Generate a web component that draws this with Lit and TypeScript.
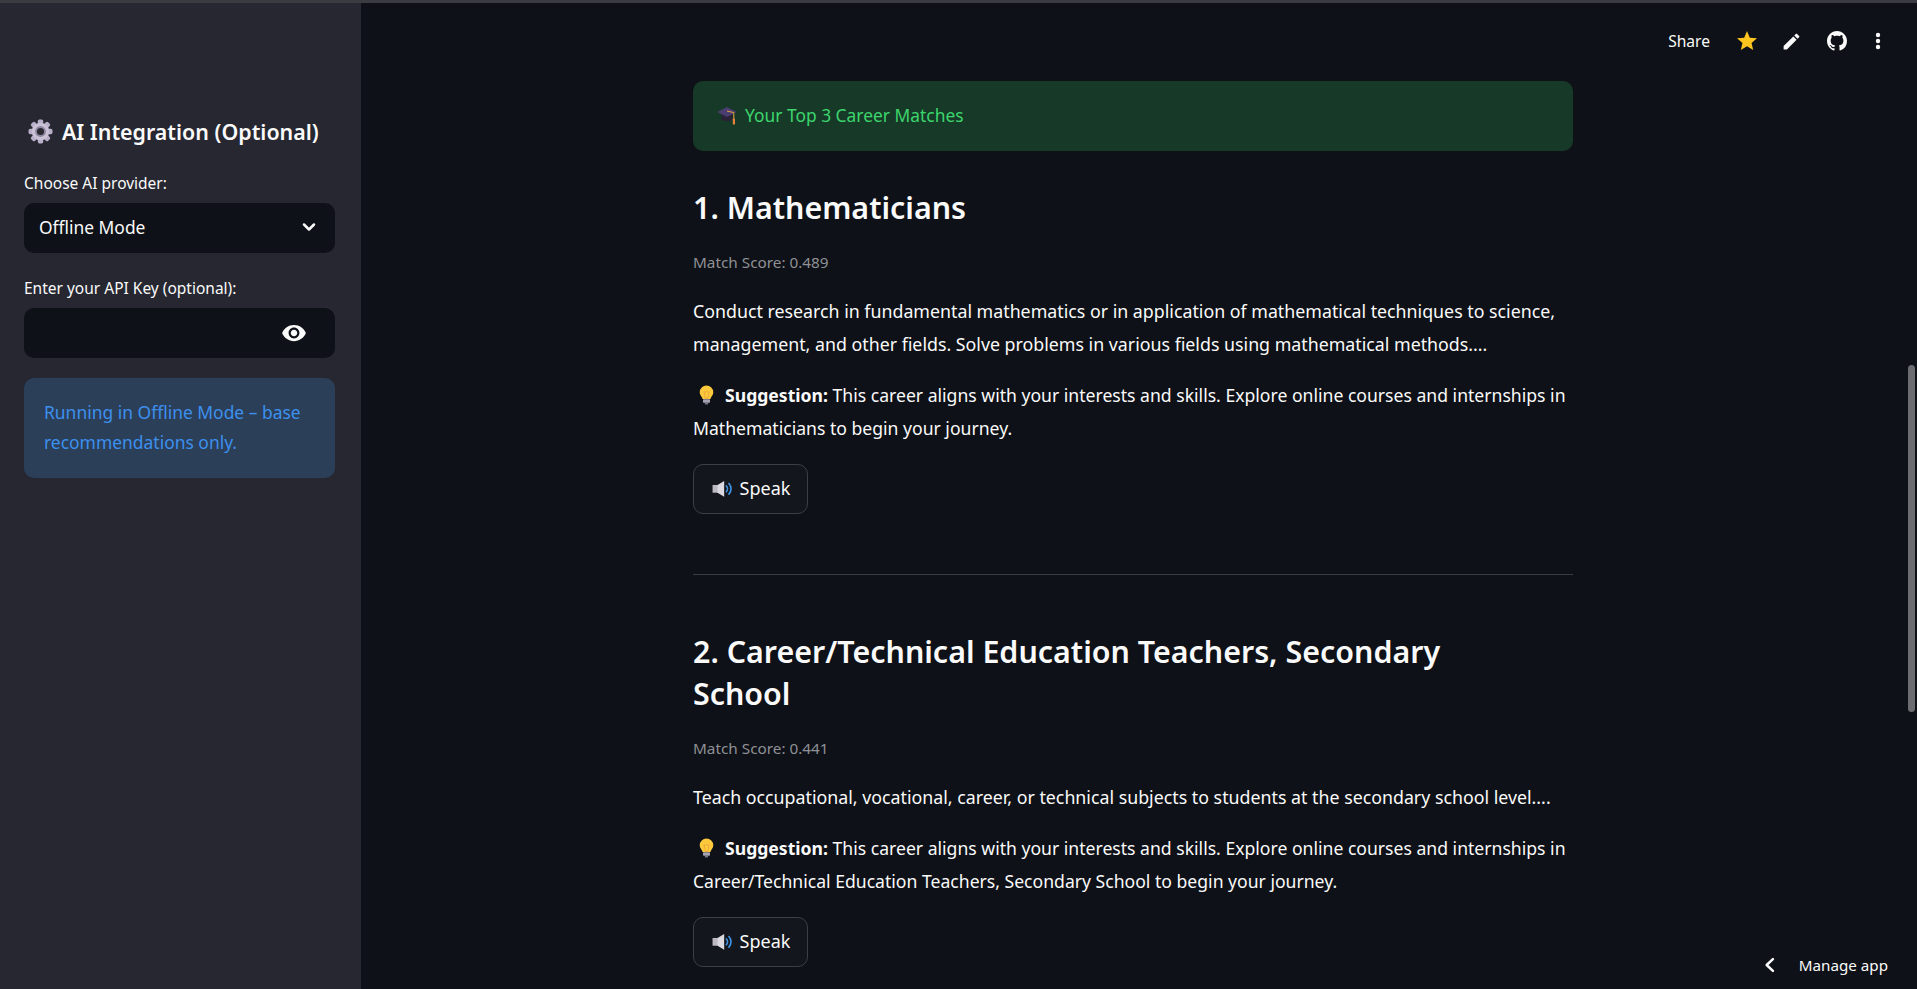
import { html, css, LitElement, svg } from 'lit';
import { customElement } from 'lit/decorators.js';

const careers = [
	{
		title: '1. Mathematicians',
		score: '0.489',
		text: 'Conduct research in fundamental mathematics or in application of mathematical techniques to science, management, and other fields. Solve problems in various fields using mathematical methods....',
		name: 'Mathematicians',
	},
	{
		title: '2. Career/Technical Education Teachers, Secondary School',
		score: '0.441',
		text: 'Teach occupational, vocational, career, or technical subjects to students at the secondary school level....',
		name: 'Career/Technical Education Teachers, Secondary School',
	},
];

const gear = svg`<svg class="emoji" viewBox="0 0 24 24" width="25" height="25">
	<g fill="#b9afc9">
		${[0, 45, 90, 135, 180, 225, 270, 315].map((a) => svg`<rect x="9.4" y="0.5" width="5.2" height="6" rx="1.6" transform="rotate(${a} 12 12)"/>`)}
	</g>
	<circle cx="12" cy="12" r="8.4" fill="#c9c2d6"/>
	<circle cx="12" cy="12" r="5.2" fill="#8f869f"/>
	<circle cx="12" cy="12" r="3.4" fill="#2b2a33"/>
</svg>`;

const cap = svg`<svg class="emoji" viewBox="0 0 20 19" width="20" height="19">
	<path d="M4.6 8v5.4c2 2 8.800 2 10.800 0V8z" fill="#2a2338"/>
	<path d="M10 1 19.800 6 10 11 .2 6z" fill="#4a3d70"/>
	<path d="M10 5l6.800 1.600v6.400" fill="none" stroke="#e5a53f" stroke-width="1"/>
	<rect x="15.800" y="12.600" width="2.200" height="6" rx=".7" fill="#e8833a"/>
</svg>`;

const bulb = svg`<svg class="emoji" viewBox="0 0 17 20" width="17" height="20">
	<path d="M8.500 .5a6.800 6.800 0 0 0-6.800 6.800c0 2.800 2.200 4.200 2.900 6.700h7.800c.7-2.500 2.900-3.900 2.900-6.700A6.800 6.800 0 0 0 8.500 .5z" fill="#fcc93c"/>
	<path d="M6 6.500c.8.800 1.700.8 2.500 0 .8.800 1.700.8 2.500 0L9.800 13.500H7.200z" fill="none" stroke="#e8963a" stroke-width=".6"/>
	<rect x="5" y="14.200" width="7" height="3.600" rx=".8" fill="#a5a3b3"/>
	<rect x="6.800" y="17.800" width="3.400" height="1.800" rx=".8" fill="#77758a"/>
</svg>`;

const speaker = svg`<svg class="emoji" viewBox="0 0 19 16" width="21" height="17.700">
	<rect x=".5" y="4.500" width="5" height="7" fill="#bdb9c2"/>
	<path d="M5 4.500 11 .8v14.400l-6-3.700z" fill="#dcd8e0"/>
	<path d="M13 5.400a3.800 3.800 0 0 1 0 5.200M15.300 3.200a7 7 0 0 1 0 9.600" fill="none" stroke="#3f93e4" stroke-width="1.500" stroke-linecap="round"/>
</svg>`;

@customElement('app-root')
export class AppRoot extends LitElement {
	static styles = css`
		:host {
			display: flex;
			flex-direction: column;
			height: 100vh;
			overflow: hidden;
			position: relative;
			background: #0e1117;
			color: #fafafa;
			font-family: 'Noto Sans', sans-serif;
			font-size: 18px;
		}

		.topline {
			height: 3px;
			flex: none;
			background: #3b3c41;
		}

		.page {
			flex: 1;
			display: flex;
			min-height: 0;
		}

		.sidebar {
			width: 361px;
			flex: none;
			box-sizing: border-box;
			background: #262730;
			padding: 110px 26px 0 24px;
		}

		.side-title {
			display: flex;
			align-items: center;
			gap: 9px;
			margin: 0 0 0 4px;
			height: 36px;
			font-size: 21.4px;
			font-weight: 600;
			white-space: nowrap;
		}

		.field-label {
			font-size: 15.5px;
			line-height: 24px;
			margin-top: 22px;
			margin-bottom: 8px;
		}

		.field-label.second {
			margin-top: 23px;
			margin-bottom: 8px;
		}

		.field {
			height: 50px;
			border-radius: 10px;
			background: #0e1117;
			display: flex;
			align-items: center;
			justify-content: space-between;
			box-sizing: border-box;
			padding: 0 16px 2px 15px;
			font-size: 17.4px;
		}

		.field.key {
			padding: 0 28px 0 16px;
			justify-content: flex-end;
		}

		.side-info {
			margin-top: 20px;
			height: 100px;
			box-sizing: border-box;
			padding: 19px 20px;
			border-radius: 10px;
			background: #2b3f58;
			color: #3d8fee;
			font-size: 17.45px;
			line-height: 30px;
		}

		.main {
			flex: 1;
			display: flex;
			flex-direction: column;
			align-items: flex-start;
			padding: 78px 0 0 332px;
			min-width: 0;
		}

		.content {
			width: 880px;
		}

		.banner {
			height: 70px;
			box-sizing: border-box;
			display: flex;
			align-items: center;
			gap: 8px;
			padding: 0 24px 2px;
			border-radius: 10px;
			background: #173a28;
			color: #3dd56d;
			font-size: 17.4px;
		}

		h2 {
			margin: 35.5px 0 0;
			max-width: 800px;
			font-size: 30.4px;
			font-weight: 600;
			line-height: 42px;
			color: #fafafa;
		}

		.score {
			margin-top: 21px;
			font-size: 15.3px;
			line-height: 24px;
			color: #8e9095;
		}

		p {
			margin: 21.5px 0 0;
			font-size: 17.8px;
			line-height: 33px;
		}

		p.tip {
			margin-top: 18px;
			font-size: 17.6px;
		}

		.emoji {
			flex: none;
			vertical-align: middle;
		}

		p .emoji {
			margin: -4px 10px 0 5px;
		}

		.speak {
			margin-top: 19px;
			width: 115px;
			height: 50px;
			box-sizing: border-box;
			display: flex;
			align-items: center;
			justify-content: center;
			gap: 7px;
			padding: 0 0 0 1px;
			border: 1px solid #3d3f47;
			border-radius: 10px;
			background: #13161d;
			color: #fafafa;
			font: inherit;
			font-size: 18px;
		}

		.speak span {
			margin-bottom: 2px;
		}

		hr {
			margin: 60px 0 55.5px;
			border: none;
			height: 1px;
			background: #3a3c43;
		}

		.career + hr + .career h2 {
			margin-top: 0;
		}

		.toolbar {
			position: absolute;
			top: 24px;
			right: 20px;
			display: flex;
			align-items: center;
			height: 34px;
			font-size: 15.6px;
		}

		.toolbar .share {
			margin-right: 14px;
		}

		.tool {
			width: 45px;
			display: flex;
			justify-content: center;
		}

		.tool.more {
			width: 38px;
		}

		.manage {
			position: absolute;
			right: 29px;
			bottom: 10px;
			display: flex;
			align-items: center;
			gap: 19px;
			font-size: 15.2px;
			line-height: 28px;
		}

		.scroll-thumb {
			position: absolute;
			top: 365px;
			right: 2px;
			width: 7px;
			height: 347px;
			border-radius: 4px;
			background: #6b6d70;
		}
	`;

	renderCareer(c: (typeof careers)[number]) {
		return html`<section class="career">
			<h2>${c.title}</h2>
			<div class="score">Match Score: ${c.score}</div>
			<p>${c.text}</p>
			<p class="tip">${bulb}<strong>Suggestion:</strong> This career aligns with your interests and skills. Explore online courses and internships in ${c.name} to begin your journey.</p>
			<button class="speak">${speaker}<span>Speak</span></button>
		</section>`;
	}

	render() {
		return html`
			<div class="topline"></div>
			<div class="page">
				<aside class="sidebar">
					<h3 class="side-title">${gear}<span>AI Integration (Optional)</span></h3>
					<div class="field-label">Choose AI provider:</div>
					<div class="field">
						<span>Offline Mode</span>
						<svg viewBox="0 0 24 24" width="20" height="20" fill="none" stroke="#fafafa" stroke-width="3" stroke-linecap="round" stroke-linejoin="round"><path d="M6 9l6 6 6-6"/></svg>
					</div>
					<div class="field-label second">Enter your API Key (optional):</div>
					<div class="field key">
						<svg viewBox="0 0 24 24" width="26" height="26" fill="#fafafa"><path d="M12 4.5C7 4.5 2.73 7.61 1 12c1.73 4.39 6 7.5 11 7.5s9.27-3.11 11-7.5c-1.73-4.39-6-7.5-11-7.5zM12 17c-2.76 0-5-2.24-5-5s2.24-5 5-5 5 2.24 5 5-2.24 5-5 5zm0-8c-1.66 0-3 1.34-3 3s1.34 3 3 3 3-1.34 3-3-1.34-3-3-3z"/></svg>
					</div>
					<div class="side-info">Running in Offline Mode – base recommendations only.</div>
				</aside>
				<main class="main">
					<div class="content">
						<div class="banner">${cap}<span>Your Top 3 Career Matches</span></div>
						${this.renderCareer(careers[0])}
						<hr />
						${this.renderCareer(careers[1])}
					</div>
				</main>
			</div>
			<div class="toolbar">
				<span class="share">Share</span>
				<span class="tool"><svg viewBox="0 0 24 24" width="24" height="24" fill="#fdc51e"><path d="M12 17.27 18.18 21l-1.64-7.03L22 9.24l-7.19-.61L12 2 9.19 8.63 2 9.24l5.46 4.73L5.82 21z"/></svg></span>
				<span class="tool"><svg viewBox="0 0 24 24" width="21" height="21" fill="#fafafa"><path d="M3 17.25V21h3.75L17.81 9.94l-3.75-3.75L3 17.25zM20.71 7.04a1 1 0 0 0 0-1.41l-2.34-2.34a1 1 0 0 0-1.41 0l-1.83 1.83 3.75 3.75 1.83-1.83z"/></svg></span>
				<span class="tool"><svg viewBox="0 0 16 16" width="20" height="20" fill="#fafafa"><path d="M8 0C3.58 0 0 3.58 0 8c0 3.54 2.29 6.53 5.47 7.59.4.07.55-.17.55-.38 0-.19-.01-.82-.01-1.49-2.01.37-2.53-.49-2.69-.94-.09-.23-.48-.94-.82-1.13-.28-.15-.68-.52-.01-.53.63-.01 1.08.58 1.23.82.72 1.21 1.87.87 2.33.66.07-.52.28-.87.51-1.07-1.78-.2-3.64-.89-3.64-3.95 0-.87.31-1.59.82-2.15-.08-.2-.36-1.02.08-2.12 0 0 .67-.21 2.2.82.64-.18 1.32-.27 2-.27s1.36.09 2 .27c1.53-1.04 2.2-.82 2.2-.82.44 1.1.16 1.92.08 2.12.51.56.82 1.27.82 2.15 0 3.07-1.87 3.75-3.65 3.95.29.25.54.73.54 1.48 0 1.07-.01 1.93-.01 2.2 0 .21.15.46.55.38A8.01 8.01 0 0 0 16 8c0-4.42-3.58-8-8-8z"/></svg></span>
				<span class="tool more"><svg viewBox="0 0 24 24" width="24" height="24" fill="#fafafa"><circle cx="12" cy="6" r="2.2"/><circle cx="12" cy="12" r="2.2"/><circle cx="12" cy="18" r="2.2"/></svg></span>
			</div>
			<div class="manage">
				<svg viewBox="0 0 24 24" width="20" height="20" fill="none" stroke="#fafafa" stroke-width="3" stroke-linecap="round" stroke-linejoin="round"><path d="M15.500 5l-7.500 7 7.500 7"/></svg>
				<span>Manage app</span>
			</div>
			<div class="scroll-thumb"></div>
		`;
	}
}

declare global {
	interface HTMLElementTagNameMap {
		'app-root': AppRoot;
	}
}
